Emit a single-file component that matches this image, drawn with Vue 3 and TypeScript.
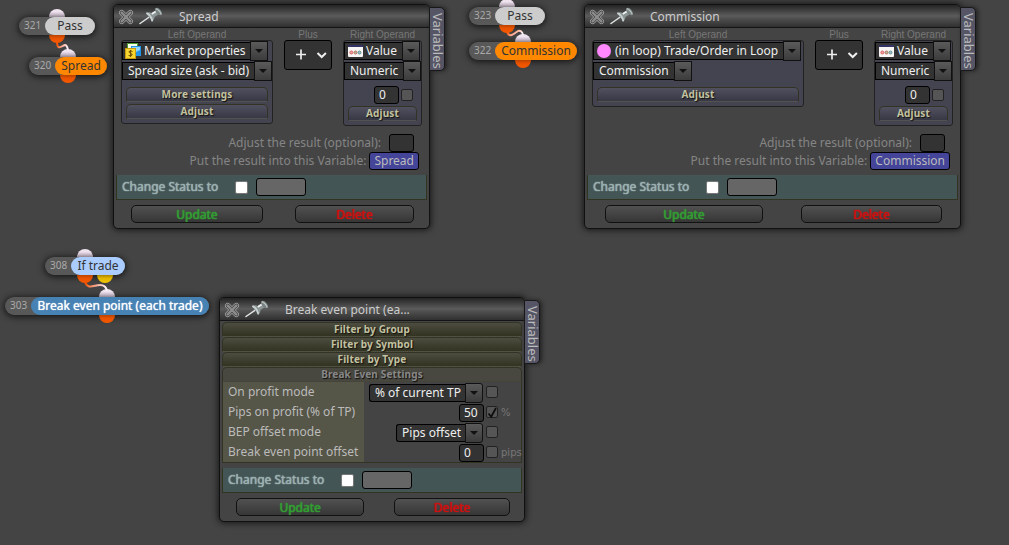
<script setup lang="ts">
interface FlowNode {
  id: number
  text: string
  x: number
  y: number
  w: number
  kind: string
  port: number
  extraPort?: number
}

interface Select {
  text: string
  w: number
  icon?: 'market' | 'loop' | 'value'
}

interface Operand {
  title: string
  w: number
  selects: Select[]
  value?: string
  links: string[]
}

interface Panel {
  name: string
  title: string
  variable?: string
  left?: Operand
  right?: Operand
}

interface Setting {
  label: string
  text: string
  select?: boolean
  checked?: boolean
  unit?: string
}

const nodes: FlowNode[] = [
  { id: 321, text: 'Pass', x: 19, y: 17, w: 76, kind: 'pass', port: 38 },
  { id: 320, text: 'Spread', x: 29, y: 57, w: 78, kind: 'formula', port: 39 },
  { id: 323, text: 'Pass', x: 469, y: 7, w: 76, kind: 'pass', port: 38 },
  { id: 322, text: 'Commission', x: 469, y: 42, w: 108, kind: 'formula', port: 54 },
  { id: 308, text: 'If trade', x: 45, y: 257, w: 80, kind: 'condition', port: 40, extraPort: 60 },
  { id: 303, text: 'Break even point (each trade)', x: 5, y: 297, w: 204, kind: 'action', port: 102 },
]

const value: Operand = {
  title: 'Right Operand',
  w: 79,
  selects: [
    { text: 'Value', w: 76, icon: 'value' },
    { text: 'Numeric', w: 77 },
  ],
  value: '0',
  links: ['Adjust'],
}

const panels: Panel[] = [
  {
    name: 'spread',
    title: 'Spread',
    variable: 'Spread',
    left: {
      title: 'Left Operand',
      w: 152,
      selects: [
        { text: 'Market properties', w: 146, icon: 'market' },
        { text: 'Spread size (ask - bid)', w: 150 },
      ],
      links: ['More settings', 'Adjust'],
    },
    right: value,
  },
  {
    name: 'commission',
    title: 'Commission',
    variable: 'Commission',
    left: {
      title: 'Left Operand',
      w: 212,
      selects: [
        { text: '(in loop) Trade/Order in Loop', w: 208, icon: 'loop' },
        { text: 'Commission', w: 99 },
      ],
      links: ['Adjust'],
    },
    right: value,
  },
  { name: 'breakeven', title: 'Break even point (ea...' },
]

const filters = ['Filter by Group', 'Filter by Symbol', 'Filter by Type']

const settings: Setting[] = [
  { label: 'On profit mode', text: '% of current TP', select: true },
  { label: 'Pips on profit (% of TP)', text: '50', checked: true, unit: '%' },
  { label: 'BEP offset mode', text: 'Pips offset', select: true },
  { label: 'Break even point offset', text: '0', unit: 'pips' },
]
</script>

<template>
  <main class="canvas">
    <svg class="wires" width="1009" height="545" fill="none" stroke-width="2">
      <defs>
        <linearGradient id="wire" x1="0" y1="0" x2="1" y2="0.3">
          <stop offset="0.1" stop-color="#f65200" />
          <stop offset="0.5" stop-color="#f9a184" />
          <stop offset="1" stop-color="#fdeff5" />
        </linearGradient>
      </defs>
      <path stroke="url(#wire)" d="M57 42C57 51 62 46 65 45Q67 45 68 50" />
      <path stroke="url(#wire)" d="M507 32C509 38 514 34 518 31Q522 30 523 35" />
      <path stroke="url(#wire)" d="M85 282C88 290 94 285 100 285Q106 285 107 291" />
    </svg>

    <div
      v-for="n in nodes"
      :key="n.id"
      class="node"
      :class="n.kind"
      :style="{ left: n.x + 'px', top: n.y + 'px', width: n.w + 'px' }"
    >
      <div class="pill">
        <span class="num">{{ n.id }}</span>
        <span class="label">{{ n.text }}</span>
      </div>
      <i class="port in" :style="{ left: n.port - 8 + 'px' }"></i>
      <i class="port out" :style="{ left: n.port - 8 + 'px' }"></i>
      <i v-if="n.extraPort" class="port out alt" :style="{ left: n.extraPort - 8 + 'px' }"></i>
    </div>

    <section v-for="p in panels" :key="p.name" class="panel" :class="p.name">
      <div class="tab"><span>Variables</span></div>
      <header>
        <svg class="close" width="16" height="16" viewBox="0 0 16 16">
          <path d="M3.7 3.7l8.6 8.6M12.3 3.7l-8.6 8.600" stroke="#a8a8a8" stroke-width="5.4" stroke-linecap="round" />
          <path d="M3.7 3.7l8.6 8.6M12.3 3.7l-8.6 8.600" stroke="#3c3c3c" stroke-width="4" stroke-linecap="round" />
          <path d="M3.7 3.7l8.6 8.6M12.3 3.7l-8.6 8.600" stroke="#8c8c8c" stroke-width="2.6" stroke-linecap="round" />
        </svg>
        <svg class="pin" width="24" height="18" viewBox="0 0 24 18">
          <path d="M1 16.5L11 9.5" stroke="#e2e6e6" stroke-width="1.5" stroke-linecap="round" />
          <path d="M7 6.3Q10 4.5 12.5 6L17 3L20 7L15.5 10Q15.8 12.5 13.3 14.5Z" fill="#8b9494" />
          <path d="M7.3 6.2Q12 7.5 13.3 14.3" stroke="#c9d1d1" stroke-width="1.8" fill="none" />
          <path d="M12.8 7L17.5 4" stroke="#eef2f2" stroke-width="1.6" />
          <ellipse cx="19.5" cy="4.5" rx="2.5" ry="4.3" transform="rotate(-38 19.5 4.5)" fill="#788181" />
          <path d="M16.7 1.6Q20.5 3 22.3 7.4" stroke="#bcc4c4" stroke-width="1.2" fill="none" />
        </svg>
        <h2>{{ p.title }}</h2>
      </header>

      <template v-if="p.left && p.right">
        <div class="formula-row">
          <div v-for="(o, k) in [p.left, p.right]" :key="k" class="operand" :class="{ second: k === 1 }">
            <small>{{ o.title }}</small>
            <div class="opbox" :style="{ width: o.w + 'px' }">
              <div v-for="s in o.selects" :key="s.text" class="select" :style="{ width: s.w + 'px' }">
                <span class="picked" :class="s.icon">
                  <svg v-if="s.icon === 'market'" width="16" height="16" viewBox="0 0 16 16">
                    <rect x="2.5" y="0.5" width="10" height="8" fill="#f4fff0" stroke="#4f9d2d" />
                    <rect x="6" y="3" width="10" height="10" fill="#2393e8" />
                    <path d="M7 4h8v3L7 11z" fill="#8fd3ff" />
                    <rect x="0.5" y="5.5" width="10" height="10" fill="#f8d631" stroke="#c89a10" />
                    <path d="M7.500 8.500Q5.500 7.300 4 8.500C3.500 10.200 7.500 10.200 7.200 12Q5.500 13.500 3.600 12.500M5.600 7v7" stroke="#6b4a00" fill="none" />
                  </svg>
                  <i v-else-if="s.icon === 'loop'" class="dot"></i>
                  <svg v-else-if="s.icon === 'value'" width="15" height="12" viewBox="0 0 15 12">
                    <rect width="15" height="12" rx="1" fill="#faf6f6" />
                    <path d="M0 0h15v2H0z" fill="#343467" />
                    <g stroke-width="1">
                      <circle cx="3.3" cy="7.5" r="1.500" fill="#f0a0a0" stroke="#d96565" />
                      <circle cx="7.5" cy="7.5" r="1.500" fill="#a5c59a" stroke="#c3635b" />
                      <circle cx="11.5" cy="7.5" r="1.500" fill="#a0b8e0" stroke="#5d9682" />
                    </g>
                  </svg>
                  {{ s.text }}
                </span>
                <b class="arrow"></b>
              </div>
              <div v-if="o.value" class="number-row">
                <span class="field">{{ o.value }}</span><i class="check"></i>
              </div>
              <div class="links">
                <div v-for="l in o.links" :key="l" class="link">{{ l }}</div>
              </div>
            </div>
          </div>
          <div class="operator">
            <small>Plus</small>
            <div class="opselect">
              <svg width="46" height="28" viewBox="0 0 46 28" fill="none" stroke="#eee" stroke-width="1.7">
                <path d="M11 13.500h10M16 8.500v10" />
                <path d="M32.500 12l4.200 4 4.200-4" stroke-width="2" />
              </svg>
            </div>
          </div>
        </div>
        <div class="result">
          <div><span>Adjust the result (optional):</span><b class="adjust"></b></div>
          <div><span>Put the result into this Variable:</span><b class="variable">{{ p.variable }}</b></div>
        </div>
      </template>

      <template v-else>
        <div class="filters">
          <div v-for="f in filters" :key="f" class="filter">{{ f }}</div>
          <div class="filter open">Break Even Settings</div>
        </div>
        <div class="settings">
          <div v-for="s in settings" :key="s.label" class="setting">
            <label>{{ s.label }}</label>
            <div class="control">
              <div v-if="s.select" class="select">
                <span class="picked">{{ s.text }}</span><b class="arrow"></b>
              </div>
              <span v-else class="field">{{ s.text }}</span>
              <i class="check">
                <svg v-if="s.checked" width="12" height="12" viewBox="0 0 12 12">
                  <path d="M1.500 6.500l2.700 3.200L9 1" fill="none" stroke="#0c0c0c" stroke-width="1.7" />
                </svg>
              </i>
              <span class="unit">{{ s.unit }}</span>
            </div>
          </div>
        </div>
      </template>

      <div class="status"><span>Change Status to</span><i></i><b></b></div>
      <footer>
        <button class="update">Update</button>
        <button class="delete">Delete</button>
      </footer>
    </section>
  </main>
</template>

<style>
body {
  background: #444;
}
</style>

<style scoped>
* {
  box-sizing: border-box;
}
.canvas {
  position: relative;
  width: 1009px;
  height: 545px;
  overflow: hidden;
  background: #444;
  font: 12px/18px 'Noto Sans', 'Open Sans', sans-serif;
  color: #ddd;
  white-space: nowrap;
}
svg {
  display: block;
  flex: none;
}
.wires {
  position: absolute;
  inset: 0;
  z-index: 1;
}

/* flow nodes */
.node {
  position: absolute;
  height: 18px;
}
.pill {
  position: relative;
  display: flex;
  height: 18px;
  border-radius: 9px;
  background: #585858;
  box-shadow: 0 1px 6px 1px #161616;
}
.num {
  width: 26px;
  padding-left: 5px;
  font-size: 10px;
  line-height: 17px;
  color: #aaa;
}
.label {
  flex: 1;
  border-radius: 9px;
  text-align: center;
  color: #333;
}
.pass .label {
  background: #ccc;
}
.formula .label {
  background: #ff8800;
}
.condition .label {
  background: #aaccff;
}
.action .label {
  background: #4682b4;
  color: #fff;
  text-shadow: 0 0 1px #fff;
}
.port {
  position: absolute;
  width: 16px;
  height: 8px;
}
.port.in {
  top: -8px;
  border-radius: 8px 8px 0 0;
  background: linear-gradient(#f0e3f0 35%, #c4b6c4 70%, #8e848e);
}
.port.out {
  bottom: -8px;
  border-radius: 0 0 8px 8px;
  background: linear-gradient(#b84200, #e85200 40%, #f85a00);
}
.port.alt {
  background: linear-gradient(#a88400, #e0b400 40%, #f4c800);
}

/* windows */
.panel {
  position: absolute;
  display: flex;
  flex-direction: column;
  height: 225px;
  border: 1px solid #111;
  border-radius: 5px;
  background: #444;
  box-shadow: 0 0 6px 1px #161616;
}
.spread {
  left: 113px;
  top: 4px;
  width: 317px;
}
.commission {
  left: 584px;
  top: 4px;
  width: 377px;
}
.breakeven {
  left: 219px;
  top: 297px;
  width: 306px;
}
.tab {
  position: absolute;
  left: 100%;
  top: 2px;
  width: 16px;
  height: 64px;
  border: 1px solid #181818;
  border-radius: 0 5px 5px 0;
  background: #555566;
  color: #bbb;
  writing-mode: vertical-rl;
  font-size: 13px;
  line-height: 13px;
  padding-top: 5px;
  box-shadow: 2px 0 4px #222;
}
header {
  display: flex;
  align-items: center;
  height: 23px;
  flex: none;
  border-bottom: 1px solid #151515;
  border-radius: 4px 4px 0 0;
  background: linear-gradient(#242424, #5c5c5c 50%, #505050 60%, #303030);
}
.close {
  margin: 1px 0 0 4px;
}
.pin {
  margin: 0 0 0 5px;
}
h2 {
  margin: 2px 0 0 16px;
  font: 12px/18px 'Noto Sans', sans-serif;
  color: #ccc;
}
.formula-row {
  display: flex;
  height: 100px;
  padding-left: 7px;
}
.operand.second {
  order: 3;
  margin-left: 11px;
}
.operator {
  order: 2;
  margin-left: 11px;
}
small {
  display: block;
  height: 12px;
  font: 10px/13px 'Liberation Sans', sans-serif;
  text-align: center;
  color: #777;
}
.opselect {
  width: 48px;
  height: 30px;
  border: 1px solid #000;
  border-radius: 3px;
  background: #333;
}
.opbox {
  border: 1px solid #222;
  border-radius: 3px;
  background: #444450;
}
.select {
  display: flex;
  align-items: center;
  height: 20px;
}
.picked {
  flex: 1;
  display: flex;
  align-items: center;
  gap: 4px;
  height: 18px;
  padding-left: 5px;
  border: 1px solid #000;
  border-right: 0;
  background: #333;
  color: #eee;
}
.picked.market {
  gap: 3px;
  padding-left: 2px;
}
.picked.loop {
  padding-left: 3px;
}
.picked.value {
  gap: 3px;
  padding-left: 3px;
}
.arrow {
  display: flex;
  align-items: center;
  justify-content: center;
  flex: none;
  width: 18px;
  height: 20px;
  border: 1px solid #111;
  background: linear-gradient(#5a5a5a, #3c3c3c);
}
.arrow::after {
  content: '';
  border: solid transparent;
  border-width: 4px 4px 0;
  border-top-color: #111;
}
.dot {
  width: 14px;
  height: 14px;
  border-radius: 50%;
  background: #ff88ff;
}
.number-row {
  display: flex;
  align-items: center;
  gap: 2px;
  margin: 5px 0 -4px 30px;
}
.field {
  width: 25px;
  height: 18px;
  padding-left: 4px;
  border: 1px solid #000;
  border-radius: 3px;
  background: #333;
  color: #eee;
  line-height: 16px;
}
.check {
  width: 12px;
  height: 12px;
  border: 1px solid #222;
  border-radius: 2px;
  background: #555;
}
.links {
  display: flex;
  flex-direction: column;
  gap: 2px;
  padding: 6px 4px 4px;
}
.link,
.filter {
  height: 15px;
  border: 1px solid #333325;
  border-bottom: 1px dotted #555544;
  border-radius: 5px 5px 0 0;
  background: linear-gradient(#50505f, #383845);
  font: bold 10px/12px 'Noto Sans', sans-serif;
  letter-spacing: 0.14px;
  text-align: center;
  color: #c2c2a0;
  text-shadow: 1px 1px 1px #111;
}
.result {
  margin-top: 6px;
  height: 36px;
  color: #858585;
}
.result div {
  display: flex;
  justify-content: flex-end;
  height: 18px;
}
.adjust {
  width: 25px;
  height: 18px;
  margin: 0 15px 0 8px;
  border: 1px solid #000;
  border-radius: 3px;
  background: #333;
}
.variable {
  height: 18px;
  margin: 0 10px 0 3px;
  padding: 0 4px;
  border: 1px solid #000;
  border-radius: 3px;
  background: #444499;
  color: #bbb;
  font-weight: normal;
  line-height: 16px;
}
.status {
  display: flex;
  align-items: center;
  flex: none;
  height: 25px;
  margin: 5px 2px 0;
  padding-left: 5px;
  border: solid #333322;
  border-width: 0 1px 1px;
  background: #445555;
  color: #9bb0b0;
  text-shadow: 0 0 1px #9bb0b0, 0 0 1px #9bb0b0;
}
.status span {
  width: 113px;
}
.status i {
  width: 13px;
  height: 13px;
  border: 1px solid #777;
  border-radius: 2px;
  background: #fff;
}
.status b {
  width: 50px;
  height: 18px;
  margin-left: 8px;
  border: 1px solid #000;
  border-radius: 3px;
  background: #666;
}
footer {
  display: flex;
  gap: 32px;
  margin: 5px 15px 0 17px;
}
.commission footer {
  gap: 38px;
  margin: 5px 18px 0 20px;
}
.breakeven footer {
  gap: 30px;
  margin: 5px 14px 0 16px;
}
button {
  height: 18px;
  padding: 0;
  border: 1px solid #111;
  border-radius: 5px;
  background: linear-gradient(#515151, #363636);
  font: 12px/15px 'Noto Sans', sans-serif;
}
.update {
  flex: 132 0 0;
  color: #339933;
  text-shadow: 0 0 1px #33aa33, 0 0 1px #33aa33;
}
.delete {
  flex: 119 0 0;
  color: #cc1111;
  text-shadow: 0 0 1px #cc1111, 0 0 1px #cc1111;
}
.commission .update {
  flex-grow: 158;
}
.commission .delete {
  flex-grow: 141;
}
.filters {
  margin: 1px 2px 0;
}
.filter {
  background: linear-gradient(#4c4c40, #333322);
}
.filter.open {
  border-bottom: 1px solid #44443a;
  background: #484840;
  color: #888;
}
.settings {
  height: 81px;
  margin: 0 2px;
  border: solid #333322;
  border-width: 0 1px 1px;
}
.setting {
  display: flex;
  height: 20px;
}
label {
  width: 141px;
  padding-left: 5px;
  background: #555548;
  color: #bbb;
  line-height: 20px;
}
.control {
  flex: 1;
  display: flex;
  align-items: center;
  justify-content: flex-end;
  gap: 3px;
  padding-top: 2px;
}
.control .picked {
  padding: 0 4px 0 5px;
  border-radius: 3px 0 0 3px;
}
.control .arrow {
  border-radius: 0 3px 3px 0;
}
.control .field {
  margin-right: -1px;
}
.unit {
  width: 20px;
  margin-top: -1px;
  font: 10px/12px 'DejaVu Sans', sans-serif;
  color: #777;
}
.control .check {
  margin-top: -2px;
}
</style>
